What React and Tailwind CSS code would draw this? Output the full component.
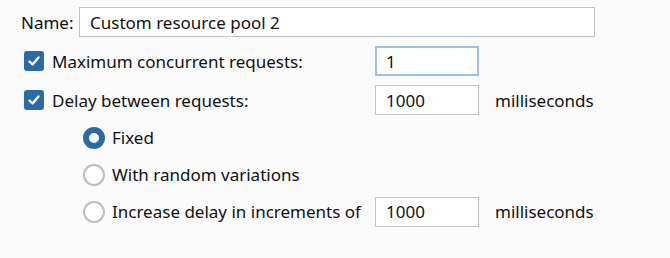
import { useState } from "react";

function Check({ checked }) {
  return (
    <span className="flex h-[20px] w-[20px] shrink-0 items-center justify-center rounded-[3px] bg-[#2c6aa4]">
      {checked && (
        <svg width="14" height="14" viewBox="0 0 14 14" fill="none">
          <polyline points="2.5,7.5 5.5,10.5 11.5,3.5" stroke="white" strokeWidth="2.4" strokeLinecap="round" strokeLinejoin="round" />
        </svg>
      )}
    </span>
  );
}

function Radio({ on }) {
  return on ? (
    <span className="h-[22px] w-[22px] shrink-0 rounded-full border-[6px] border-[#2c6aa4] bg-white" />
  ) : (
    <span className="h-[22px] w-[22px] shrink-0 rounded-full border-2 border-[#bdbdbd] bg-white" />
  );
}

function Field({ value, focused, className = "" }) {
  return (
    <div
      className={`flex h-[30px] items-center bg-white px-[10px] ${
        focused ? "border-2 border-[#9cc0e8] pl-[9px]" : "border border-[#c3c3c3]"
      } ${className}`}
    >
      {value}
    </div>
  );
}

export default function App() {
  const [mode] = useState(0);
  const radios = ["Fixed", "With random variations", "Increase delay in increments of"];

  return (
    <div
      className="h-[258px] w-[670px] bg-[#fafafa] text-[17px] leading-none text-[#111]"
      style={{ fontFamily: '"Noto Sans", "Open Sans", sans-serif' }}
    >
      <div className="flex flex-col pt-[7px]">
        <div className="flex h-[30px] items-center pl-[21px]">
          <span className="w-[58px]">Name:</span>
          <Field value="Custom resource pool 2" className="w-[516px]" />
        </div>

        <div className="mt-[9px] flex h-[30px] items-center pl-[24px]">
          <div className="flex w-[351px] items-center gap-[8px]">
            <Check checked />
            <span>Maximum concurrent requests:</span>
          </div>
          <Field value="1" focused className="w-[104px]" />
        </div>

        <div className="mt-[9px] flex h-[30px] items-center pl-[24px]">
          <div className="flex w-[351px] items-center gap-[8px]">
            <Check checked />
            <span>Delay between requests:</span>
          </div>
          <Field value="1000" className="w-[104px]" />
          <span className="ml-[16px]">milliseconds</span>
        </div>

        <div className="mt-[7px] flex flex-col gap-[6px] pl-[83px]">
          {radios.map((r, i) => (
            <div key={r} className="flex h-[31px] items-center">
              <div className="flex w-[292px] items-center gap-[7px]">
                <Radio on={mode === i} />
                <span>{r}</span>
              </div>
              {i === 2 && (
                <>
                  <Field value="1000" className="w-[104px]" />
                  <span className="ml-[16px]">milliseconds</span>
                </>
              )}
            </div>
          ))}
        </div>
      </div>
    </div>
  );
}
